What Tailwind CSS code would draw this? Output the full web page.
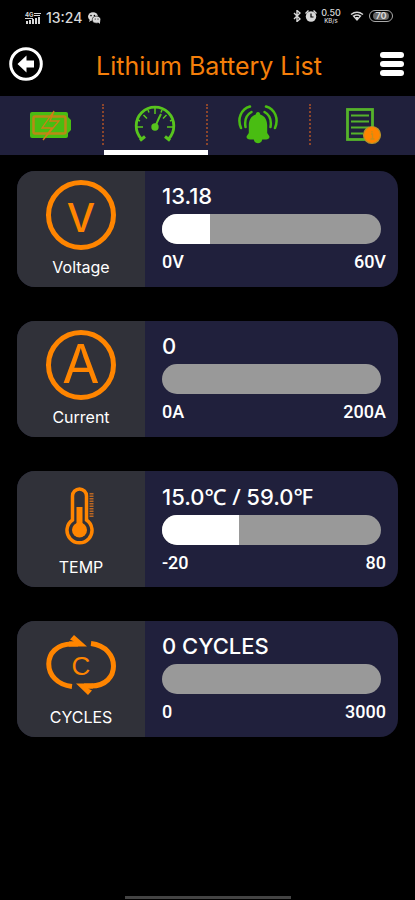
<!doctype html>
<html lang="en">
<head>
    <meta charset="UTF-8">
    <meta name="viewport" content="width=device-width, initial-scale=1.0">
    <script src="https://cdn.jsdelivr.net/npm/@tailwindcss/browser@4"></script>
    <title>Lithium Battery List</title>
</head>
<body class="bg-black">

<div class="min-h-screen flex flex-col bg-black text-white font-['Inter','Roboto',sans-serif]">
    <!-- Status bar -->
    <div class="flex h-8 items-end justify-between pl-6 pr-[22px] text-[#d8d8d8]">
        <div class="flex h-8 items-center gap-1 pt-1">
            <svg class="w-[18px] h-3" viewBox="0 0 16 12" fill="currentColor">
                <text x="0" y="5" font-size="6" font-weight="700">4G</text>
                <path d="M9 1h7v1H9zM9 3h6v1H9zM1 9h2v3H1zM4 8h2v4H4zM7 7h2v5H7zM10 6h2v6h-2zM13 5h2v7h-2zM0 6h8v1H0z"/>
            </svg>
            <span class="text-sm leading-5 font-medium">13:24</span>
            <svg class="w-4 h-3" viewBox="0 0 16 12" fill="currentColor">
                <ellipse cx="7" cy="4.5" rx="5" ry="4.3"/>
                <path d="M4 7l-1 3 3-2z"/>
                <ellipse cx="10.5" cy="7.7" rx="4.2" ry="3.5" stroke="#000" stroke-width=".6"/>
                <path d="M12 10l2 2v-3z"/>
                <circle cx="5" cy="3.6" r=".8" fill="#000"/><circle cx="8.4" cy="3.6" r=".8" fill="#000"/>
                <circle cx="9.2" cy="7" r=".6" fill="#000"/><circle cx="12" cy="7" r=".6" fill="#000"/>
            </svg>
        </div>
        <div class="flex h-8 items-center gap-1">
            <svg class="w-2 h-3" viewBox="0 0 8 12" fill="none" stroke="currentColor" stroke-width="1.4"><path d="M1 3l6 6-3 2.5v-11L7 3 1 9"/></svg>
            <svg class="w-3 h-3" viewBox="0 0 12 12" fill="currentColor">
                <circle cx="6" cy="6.5" r="5.2"/>
                <path d="M0 3l3-3 1 1-3 3zM12 3L9 0 8 1l3 3z"/>
                <path d="M6 3.5V7h2.5" fill="none" stroke="#000" stroke-width="1.2"/>
            </svg>
            <div class="flex w-5 flex-col items-center text-[9px] leading-[9px] font-medium">
                <span>0.50</span>
                <span class="text-[6px] leading-[8px]">KB/s</span>
            </div>
            <svg class="ml-1 w-4 h-3" viewBox="0 0 16 12" fill="none" stroke="currentColor">
                <path d="M2 4.500Q8 0 14 4.500" stroke-width="1.500"/>
                <path d="M4.500 6Q8 4 11.500 6L8 10z" stroke-width="1.400"/>
                <path d="M8 7v3" stroke-width="2"/>
            </svg>
            <div class="flex h-3 w-6 items-center justify-center rounded-md border border-[#aaaaaa]">
                <span class="rounded-sm bg-[#666666] px-0.5 text-[9px] leading-[8px] font-bold">70</span>
            </div>
        </div>
    </div>

    <!-- Header -->
    <header class="flex h-16 items-center justify-between px-2">
        <button type="button" aria-label="Back">
            <svg class="size-9" viewBox="0 0 36 36" fill="none">
                <circle cx="18" cy="18" r="15.300" stroke="#fff" stroke-width="3"/>
                <path d="M9.500 18l9-8.500v5h7.500v7h-7.500v5z" fill="#fff"/>
            </svg>
        </button>
        <h1 class="pt-1 text-[25px] leading-8 text-[#f57f0a]">Lithium Battery List</h1>
        <button type="button" aria-label="Menu" class="mr-[3px] flex w-[30px] flex-col gap-[3px] pl-[6px]">
            <span class="h-[6px] w-6 rounded-[3px] bg-white"></span>
            <span class="h-[6px] w-6 rounded-[3px] bg-white"></span>
            <span class="h-[6px] w-6 rounded-[3px] bg-white"></span>
        </button>
    </header>

    <!-- Tabs -->
    <nav class="grid h-[59px] grid-cols-4 bg-[#20203c]">
        <a href="#" aria-label="Battery" class="flex flex-col">
            <span class="mt-2 flex h-[41px] items-center justify-center border-r-2 border-dotted border-[#8b452c]">
                <svg class="h-10 w-12" viewBox="0 0 48 40" fill="none">
                    <path d="M5 7h34a2 2 0 012 2v3l3 3v10l-3 3v3a2 2 0 01-2 2H5a2 2 0 01-2-2V9a2 2 0 012-2z" fill="#49bd12"/>
                    <rect x="6.500" y="11.500" width="32" height="17" rx="1.500" stroke="#b98a14" stroke-width="2.500"/>
                    <path d="M27 6l-12 17h10l-9 12 16-19H23z" stroke="#d07e16" stroke-width="1.300"/>
                </svg>
            </span>
        </a>
        <a href="#" aria-label="Gauges" aria-current="page" class="flex flex-col justify-between">
            <span class="mt-2 flex h-[41px] items-center justify-center border-r-2 border-dotted border-[#8b452c]">
                <svg class="size-11" viewBox="0 0 44 44" fill="none" stroke="#58c51e">
                    <path d="M8.500 36A18.800 18.800 0 1135.500 36" stroke-width="2.800"/>
                    <path d="M7 37.500l5-4M37 37.500l-5-4" stroke-width="3"/>
                    <path d="M22 5v6M4 24h6M34 24h6M10.500 12l3.500 3.500M33.500 12L30 15.500M15 7l1 2.500M29 7l-1 2.500M5 17l2 1M39 17l-2 1" stroke-width="1.500"/>
                    <path d="M22 24l4-9 2-4" stroke-width="2"/>
                    <circle cx="22" cy="24" r="3.700" fill="#58c51e" stroke="none"/>
                </svg>
            </span>
            <span class="h-[5px] bg-white"></span>
        </a>
        <a href="#" aria-label="Alarms" class="flex flex-col">
            <span class="mt-2 flex h-[41px] items-center justify-center border-r-2 border-dotted border-[#8b452c]">
                <svg class="size-11" viewBox="0 0 44 44" fill="none" stroke="#49bd12" stroke-width="2.500" stroke-linecap="round">
                    <path d="M22 9c1.500 0 2 1.200 2.200 2.500 5 1.500 7 6 7 11V30l2 3c1 2-1 3.500-3 3.500h-4c-.5 5-7.900 5-8.400 0h-4c-2 0-4-1.500-3-3.500l2-3v-7.500c0-5 2-9.500 7-11C20 10.200 20.500 9 22 9z" fill="#49bd12" stroke="none"/>
                    <path d="M9.500 24C8.500 18 10 12 15.500 9M34.500 24c1-6-.5-12-6-15M5 25C1 16 5 6 14 3.500M39 25C43 16 39 6 30 3.500"/>
                </svg>
            </span>
        </a>
        <a href="#" aria-label="Report" class="flex flex-col">
            <span class="mt-2 flex h-[41px] items-center justify-center">
                <svg class="size-10" viewBox="0 0 40 40" fill="none" stroke="#55b32b">
                    <rect x="4.500" y="4.500" width="25" height="30" stroke-width="2.800"/>
                    <path d="M8 10.500h18M8 16.500h18M8 22.500h18M8 28.500h12" stroke-width="2"/>
                    <circle cx="29" cy="30" r="8.500" fill="#ff8400" stroke="#b4932b" stroke-width="1.200"/>
                    <path d="M29 26v1.500M28 29h1.500v5M27.500 34h4" stroke="#c9901a" stroke-width="1.300"/>
                </svg>
            </span>
        </a>
    </nav>

    <!-- Readings -->
    <main class="flex flex-col gap-[34px] px-[17px] py-4">
        <section class="flex h-[116px] overflow-hidden rounded-[18px] bg-[#20203c]">
            <div class="flex w-32 shrink-0 flex-col items-center bg-[#303139] pt-2">
                <svg class="size-18" viewBox="0 0 72 72" fill="none">
                    <circle cx="36" cy="36" r="32.500" stroke="#ff8500" stroke-width="5"/>
                    <text x="36" y="53" text-anchor="middle" font-size="40" font-weight="500" fill="#ff8500">V</text>
                </svg>
                <h2 class="mt-1 text-base leading-6">Voltage</h2>
            </div>
            <div class="flex-1 pt-[11px] pr-3 pl-[17px]">
                <p class="text-[22px] leading-7 font-medium">13.18</p>
                <div class="mt-1 mr-[5px] h-[30px] overflow-hidden rounded-full bg-[#999999]" role="progressbar" aria-label="Voltage" aria-valuemin="0" aria-valuemax="60" aria-valuenow="13.18">
                    <div class="h-full bg-white" style="width: 22%"></div>
                </div>
                <div class="mt-1 flex justify-between text-lg leading-7 font-medium font-['Roboto',sans-serif]"><span>0V</span><span>60V</span></div>
            </div>
        </section>

        <section class="flex h-[116px] overflow-hidden rounded-[18px] bg-[#20203c]">
            <div class="flex w-32 shrink-0 flex-col items-center bg-[#303139] pt-2">
                <svg class="size-18" viewBox="0 0 72 72" fill="none">
                    <circle cx="36" cy="36" r="32.500" stroke="#ff8500" stroke-width="5"/>
                    <text x="36" y="54" text-anchor="middle" font-size="54" fill="#ff8500">A</text>
                </svg>
                <h2 class="mt-1 text-base leading-6">Current</h2>
            </div>
            <div class="flex-1 pt-[11px] pr-3 pl-[17px]">
                <p class="text-[22px] leading-7 font-medium">0</p>
                <div class="mt-1 mr-[5px] h-[30px] overflow-hidden rounded-full bg-[#999999]" role="progressbar" aria-label="Current" aria-valuemin="0" aria-valuemax="200" aria-valuenow="0"></div>
                <div class="mt-1 flex justify-between text-lg leading-7 font-medium font-['Roboto',sans-serif]"><span>0A</span><span>200A</span></div>
            </div>
        </section>

        <section class="flex h-[116px] overflow-hidden rounded-[18px] bg-[#20203c]">
            <div class="flex w-32 shrink-0 flex-col items-center bg-[#303139] pt-2">
                <svg class="size-18" viewBox="0 0 72 72" fill="none">
                    <path d="M27.500 41V17a7 7 0 0114 0v24a12.500 12.500 0 11-14 0z" stroke="#ff8500" stroke-width="3.500"/>
                    <circle cx="34.500" cy="51" r="7.500" fill="#ff8500"/>
                    <path d="M34.500 28v20" stroke="#ff8500" stroke-width="6"/>
                    <path d="M46.500 14v24" stroke="#b96724" stroke-width="4" stroke-dasharray="1.500 1"/>
                </svg>
                <h2 class="mt-1 text-base leading-6">TEMP</h2>
            </div>
            <div class="flex-1 pt-[11px] pr-3 pl-[17px]">
                <p class="text-[22px] leading-7 font-medium">15.0<span class="font-['Noto_Sans',sans-serif]">℃ / </span>59.0<span class="font-['Noto_Sans',sans-serif]">℉</span></p>
                <div class="mt-1 mr-[5px] h-[30px] overflow-hidden rounded-full bg-[#999999]" role="progressbar" aria-label="Temperature" aria-valuemin="-20" aria-valuemax="80" aria-valuenow="15">
                    <div class="h-full bg-white" style="width: 35%"></div>
                </div>
                <div class="mt-1 flex justify-between text-lg leading-7 font-medium font-['Roboto',sans-serif]"><span>-20</span><span>80</span></div>
            </div>
        </section>

        <section class="flex h-[116px] overflow-hidden rounded-[18px] bg-[#20203c]">
            <div class="flex w-32 shrink-0 flex-col items-center bg-[#303139] pt-2">
                <svg class="size-18" viewBox="0 0 72 72" fill="none">
                    <path d="M27 57.500C-4 54-4 15 27 15h6M46 14.500C76 18 76 57 46 57h-7" stroke="#ff8500" stroke-width="5"/>
                    <path d="M25 10.500l4-4.500L42 17.500H24v-5h5zM47 61.500l-4 4.500L31 54.500h17v5h-5z" fill="#ff8500"/>
                    <text x="36" y="46" text-anchor="middle" font-size="26" font-family="Liberation Sans, sans-serif" fill="#ff8500">C</text>
                </svg>
                <h2 class="mt-1 text-base leading-6">CYCLES</h2>
            </div>
            <div class="flex-1 pt-[11px] pr-3 pl-[17px]">
                <p class="text-[22px] leading-7 font-medium">0 CYCLES</p>
                <div class="mt-1 mr-[5px] h-[30px] overflow-hidden rounded-full bg-[#999999]" role="progressbar" aria-label="Cycles" aria-valuemin="0" aria-valuemax="3000" aria-valuenow="0"></div>
                <div class="mt-1 flex justify-between text-lg leading-7 font-medium font-['Roboto',sans-serif]"><span>0</span><span>3000</span></div>
            </div>
        </section>
    </main>

    <!-- Home indicator -->
    <div class="mx-auto mt-auto mb-px h-[3px] w-2/5 bg-[#444444]"></div>
</div>

</body>
</html>
